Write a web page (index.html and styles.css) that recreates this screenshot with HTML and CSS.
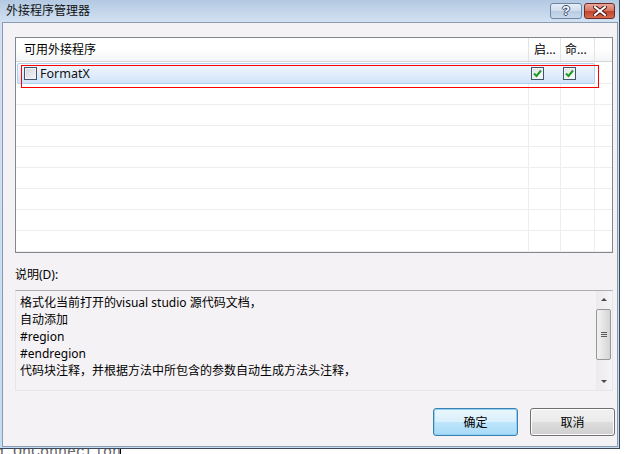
FILE: index.html
```html
<!DOCTYPE html>
<html>
<head>
<meta charset="utf-8">
<link rel="stylesheet" href="styles.css">
</head>
<body>
<div class="window">
  <div class="titlebar">
    <span class="title">外接程序管理器</span>
    <div class="caption-btns">
      <div class="cbtn help"><span>?</span></div>
      <div class="cbtn close">
        <svg width="14" height="10" viewBox="0 0 14 10">
          <path d="M2 1 L12 9 M12 1 L2 9" stroke="#4a1a1a" stroke-width="4" stroke-linecap="square"/>
          <path d="M2 1 L12 9 M12 1 L2 9" stroke="#ffffff" stroke-width="2" stroke-linecap="square"/>
        </svg>
      </div>
    </div>
  </div>
  <div class="client">
    <div class="listview">
      <div class="lv-header">
        <div class="hcol h1">可用外接程序</div>
        <div class="hcol h2">启...</div>
        <div class="hcol h3">命...</div>
        <div class="hcol h4"></div>
      </div>
      <div class="lv-body">
        <div class="row sel">
          <div class="cell c1"><span class="cb"></span><span class="name">FormatX</span></div>
          <div class="cell c2"><span class="cb checked"><svg width="9" height="9" viewBox="0 0 9 9"><path d="M1 4.5 L3.5 7 L8 1.5" fill="none" stroke="#1f9b1f" stroke-width="2"/></svg></span></div>
          <div class="cell c3"><span class="cb checked"><svg width="9" height="9" viewBox="0 0 9 9"><path d="M1 4.5 L3.5 7 L8 1.5" fill="none" stroke="#1f9b1f" stroke-width="2"/></svg></span></div>
        </div>
      </div>
      <div class="redbox"></div>
    </div>
    <div class="label">说明(D):</div>
    <div class="desc">
      <div class="desc-text">
        <div>格式化当前打开的visual studio 源代码文档，</div>
        <div>自动添加</div>
        <div>#region</div>
        <div>#endregion</div>
        <div>代码块注释，并根据方法中所包含的参数自动生成方法头注释，</div>
      </div>
      <div class="scrollbar">
        <div class="arrow up"></div>
        <div class="track">
          <div class="thumb"><span class="grip"></span></div>
        </div>
        <div class="arrow down"></div>
      </div>
    </div>
    <div class="buttons">
      <div class="btn default">确定</div>
      <div class="btn">取消</div>
    </div>
  </div>
</div>
<div class="below"><span>d OnConnection</span></div>
</body>
</html>
```

FILE: styles.css
```css
body {
  margin: 0;
  background: #ffffff;
  font-family: "Noto Sans", "Noto Sans CJK SC", sans-serif;
  font-size: 12px;
  color: #000;
}

.window {
  width: 620px;
  height: 449px;
  box-sizing: border-box;
  border-right: 1px solid #3a4758;
  border-bottom: 1px solid #3a4758;
  background: linear-gradient(#b3c9e2, #d2e1f2 22px, #c4dcf1);
  padding: 0 1px 1px 2px;
  display: flex;
  flex-direction: column;
}

.titlebar {
  height: 22px;
  display: flex;
  align-items: flex-start;
  justify-content: space-between;
}

.title {
  padding-left: 4px;
  line-height: 22px;
  font-size: 12px;
  color: #111;
}

.caption-btns {
  display: flex;
  gap: 2px;
  margin-top: 3px;
  margin-right: 3px;
}

.cbtn {
  height: 16px;
  box-sizing: border-box;
  border-radius: 3px;
  display: flex;
  align-items: center;
  justify-content: center;
}

.help {
  width: 32px;
  border: 1px solid #6f84a3;
  background: linear-gradient(#e6eef8, #cfdcec 50%, #b9cbe2 51%, #c9d9ec);
}

.help span {
  font-family: "Liberation Sans", sans-serif;
  font-weight: bold;
  font-size: 13px;
  line-height: 14px;
  color: #fff;
  text-shadow: 1px 0 #334a6a, -1px 0 #334a6a, 0 1px #334a6a, 0 -1px #334a6a;
}

.close {
  width: 31px;
  border: 1px solid #6d2b26;
  background: linear-gradient(#e9a89b, #d4715f 50%, #c2432e 51%, #d36a4e);
}

.client {
  flex: 1;
  border: 1px solid #8a9bb1;
  background: #f5f2f5;
  padding: 14px 1px 0 12px;
  display: flex;
  flex-direction: column;
}

.listview {
  position: relative;
  width: 598px;
  height: 216px;
  box-sizing: border-box;
  border: 1px solid #828790;
  background: #fff;
  display: flex;
  flex-direction: column;
}

.lv-header {
  height: 24px;
  box-sizing: border-box;
  border-bottom: 1px solid #d5d5d5;
  background: linear-gradient(#ffffff, #ffffff 50%, #f3f4f6);
  display: flex;
}

.hcol {
  box-sizing: border-box;
  line-height: 23px;
  border-right: 1px solid #e2e3e5;
  white-space: nowrap;
}

.h1 { width: 513px; padding-left: 8px; }
.h2 { width: 32px; padding-left: 5px; }
.h3 { width: 34px; padding-left: 4px; }
.h4 { flex: 1; border-right: none; }

.lv-body {
  flex: 1;
  background:
    linear-gradient(to right, transparent 512px, #eeeeee 512px, #eeeeee 513px, transparent 513px),
    linear-gradient(to right, transparent 544px, #eeeeee 544px, #eeeeee 545px, transparent 545px),
    linear-gradient(to right, transparent 578px, #eeeeee 578px, #eeeeee 579px, transparent 579px),
    repeating-linear-gradient(to bottom, transparent 0, transparent 20px, #eeeeee 20px, #eeeeee 21px);
  background-position: 0 0, 0 0, 0 0, 0 1px;
}

.row {
  display: flex;
  height: 21px;
  box-sizing: border-box;
}

.row.sel {
  margin-top: 1px;
  margin-left: 1px;
  width: 578px;
  border: 1px solid #b4cff0;
  border-radius: 2px;
  background: linear-gradient(#f1f7fe, #e2eefc 50%, #d1e4fa);
}

.cell {
  display: flex;
  align-items: center;
}

.c1 { flex: 1; padding-left: 6px; }
.c2 { width: 32px; padding-left: 2px; box-sizing: border-box; }
.c3 { width: 33px; padding-left: 2px; box-sizing: border-box; }

.cb {
  width: 13px;
  height: 13px;
  box-sizing: border-box;
  border: 1px solid #3f5570;
  background: linear-gradient(135deg, #d0d4da, #f7f7f7);
  box-shadow: inset 0 0 0 1px #f2f2f2;
  display: flex;
  align-items: center;
  justify-content: center;
}

.cb.checked {
  background: linear-gradient(135deg, #dfe3e8, #fbfbfb);
}

.name {
  padding-left: 3px;
  font-size: 12.5px;
  color: #111;
}

.redbox {
  position: absolute;
  left: 5px;
  top: 27px;
  width: 578px;
  height: 23px;
  box-sizing: border-box;
  border: 1px solid #ff0000;
}

.label {
  margin-top: 13px;
  height: 17px;
  line-height: 17px;
}

.desc {
  margin-top: 7px;
  width: 598px;
  height: 101px;
  box-sizing: border-box;
  border: 1px solid #e3e6ea;
  border-top-color: #abadb3;
  display: flex;
}

.desc-text {
  flex: 1;
  padding: 3px 0 0 4px;
  line-height: 17px;
}

.scrollbar {
  width: 16px;
  display: flex;
  flex-direction: column;
  background: linear-gradient(to right, #eceaec, #f6f4f6);
}

.arrow {
  height: 17px;
  display: flex;
  align-items: center;
  justify-content: center;
}

.arrow::before {
  content: "";
  border-left: 3px solid transparent;
  border-right: 3px solid transparent;
}

.arrow.up::before { border-bottom: 3px solid #4a4a4a; }
.arrow.down::before { border-top: 3px solid #4a4a4a; }

.track {
  flex: 1;
  padding-top: 1px;
}

.thumb {
  width: 15px;
  height: 51px;
  box-sizing: border-box;
  border: 1px solid #979797;
  border-radius: 2px;
  background: linear-gradient(to right, #f2f2f2, #e4e4e4 50%, #d4d4d4);
  display: flex;
  align-items: center;
  justify-content: center;
}

.grip {
  width: 6px;
  height: 5px;
  background: repeating-linear-gradient(#5a5a5a 0, #5a5a5a 1px, transparent 1px, transparent 2px);
}

.buttons {
  margin-top: 17px;
  display: flex;
  justify-content: flex-end;
  gap: 12px;
  padding-right: 1px;
}

.btn {
  width: 85px;
  height: 28px;
  box-sizing: border-box;
  border: 1px solid #707070;
  border-radius: 3px;
  background: linear-gradient(#f2f2f2, #ebebeb 50%, #dddddd 51%, #cfcfcf);
  box-shadow: inset 0 0 0 1px #fcfcfc;
  display: flex;
  align-items: center;
  justify-content: center;
}

.btn.default {
  border-color: #3c7fb1;
  background: linear-gradient(#eaf6fd, #d9f0fc 50%, #bee6fd 51%, #a7d9f5);
  box-shadow: inset 0 0 0 1px #8fd2f4;
}

.below {
  height: 5px;
  overflow: hidden;
}

.below span {
  display: block;
  width: 126px;
  margin-top: -4px;
  margin-left: -5px;
  box-sizing: border-box;
  border-right: 1px solid #000;
  font-family: "Liberation Mono", monospace;
  font-size: 15px;
  line-height: 15px;
  color: #666;
  white-space: nowrap;
  overflow: hidden;
}
```
